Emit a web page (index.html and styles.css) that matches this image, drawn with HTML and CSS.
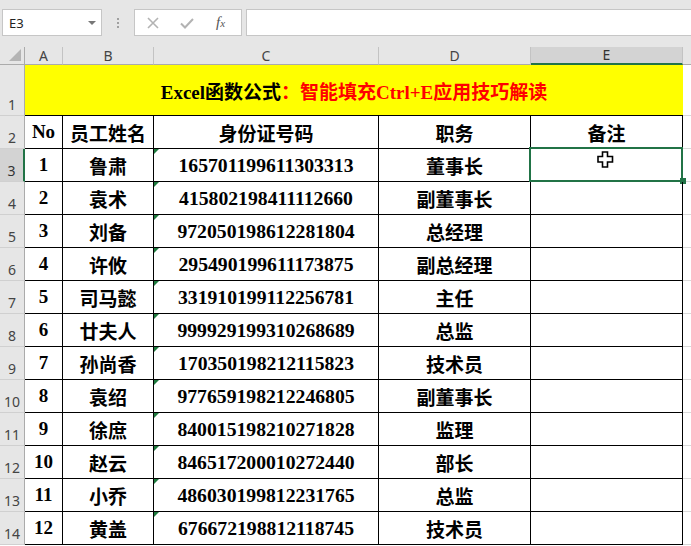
FILE: index.html
```html
<!DOCTYPE html>
<html>
<head>
<meta charset="utf-8">
<link rel="stylesheet" href="styles.css">
</head>
<body>
<div class="toolbar">
  <div class="namebox"><span class="ref">E3</span><span class="caret"></span></div>
  <div class="dots"><i></i><i></i><i></i></div>
  <div class="fxbox">
    <svg class="ico" width="14" height="14" viewBox="0 0 14 14"><path d="M2 2 L12 12 M12 2 L2 12" stroke="#b3b3b3" stroke-width="1.6" fill="none"/></svg>
    <svg class="ico" width="16" height="14" viewBox="0 0 16 14"><path d="M2 7.5 L6 11.5 L14 3" stroke="#b3b3b3" stroke-width="2" fill="none"/></svg>
    <span class="fx">f<small>x</small></span>
  </div>
  <div class="formula"></div>
</div>
<div class="sheet">
  <div class="corner"><span class="tri"></span></div>
  <div class="ch">A</div><div class="ch">B</div><div class="ch">C</div><div class="ch">D</div><div class="ch sel">E</div><div class="ch last"></div>

  <div class="rh">1</div>
  <div class="title">Excel函数公式<span class="red">：智能填充Ctrl+E应用技巧解读</span></div>
  <div class="f"></div>

  <div class="rh">2</div>
  <div class="c">No</div><div class="c">员工姓名</div><div class="c">身份证号码</div><div class="c">职务</div><div class="c">备注</div><div class="f"></div>

  <div class="rh sel">3</div>
  <div class="c">1</div><div class="c">鲁肃</div><div class="c num">165701199611303313</div><div class="c">董事长</div><div class="c active"><span class="selbox"></span><span class="handle"></span><svg class="cursor" width="17" height="18" viewBox="0 0 17 18"><path d="M5.5 1 H10.5 V5.5 H15.5 V11 H10.5 V16 H5.5 V11 H1 V5.5 H5.5 Z" fill="#fff" stroke="#000" stroke-width="1.6"/></svg></div><div class="f"></div>

  <div class="rh">4</div>
  <div class="c">2</div><div class="c">袁术</div><div class="c num">415802198411112660</div><div class="c">副董事长</div><div class="c"></div><div class="f"></div>

  <div class="rh">5</div>
  <div class="c">3</div><div class="c">刘备</div><div class="c num">972050198612281804</div><div class="c">总经理</div><div class="c"></div><div class="f"></div>

  <div class="rh">6</div>
  <div class="c">4</div><div class="c">许攸</div><div class="c num">295490199611173875</div><div class="c">副总经理</div><div class="c"></div><div class="f"></div>

  <div class="rh">7</div>
  <div class="c">5</div><div class="c">司马懿</div><div class="c num">331910199112256781</div><div class="c">主任</div><div class="c"></div><div class="f"></div>

  <div class="rh">8</div>
  <div class="c">6</div><div class="c">廿夫人</div><div class="c num">999929199310268689</div><div class="c">总监</div><div class="c"></div><div class="f"></div>

  <div class="rh">9</div>
  <div class="c">7</div><div class="c">孙尚香</div><div class="c num">170350198212115823</div><div class="c">技术员</div><div class="c"></div><div class="f"></div>

  <div class="rh">10</div>
  <div class="c">8</div><div class="c">袁绍</div><div class="c num">977659198212246805</div><div class="c">副董事长</div><div class="c"></div><div class="f"></div>

  <div class="rh">11</div>
  <div class="c">9</div><div class="c">徐庶</div><div class="c num">840015198210271828</div><div class="c">监理</div><div class="c"></div><div class="f"></div>

  <div class="rh">12</div>
  <div class="c">10</div><div class="c">赵云</div><div class="c num">846517200010272440</div><div class="c">部长</div><div class="c"></div><div class="f"></div>

  <div class="rh">13</div>
  <div class="c">11</div><div class="c">小乔</div><div class="c num">486030199812231765</div><div class="c">总监</div><div class="c"></div><div class="f"></div>

  <div class="rh">14</div>
  <div class="c">12</div><div class="c">黄盖</div><div class="c num">676672198812118745</div><div class="c">技术员</div><div class="c"></div><div class="f"></div>
</div>
</body>
</html>
```
FILE: styles.css
```css
html, body {
  margin: 0;
  padding: 0;
}
body {
  width: 691px;
  height: 546px;
  overflow: hidden;
  background: #fff;
  font-family: "Liberation Serif", "Noto Sans CJK SC", serif;
}

/* formula bar */
.toolbar {
  height: 47px;
  box-sizing: border-box;
  padding-top: 9px;
  background: #e6e6e6;
  display: flex;
  align-items: flex-start;
}
.namebox {
  margin-left: 2px;
  width: 100px;
  height: 27px;
  box-sizing: border-box;
  background: #fff;
  border: 1px solid #c6c6c6;
  display: flex;
  align-items: center;
  justify-content: space-between;
  padding: 0 5px 0 6px;
  font-family: "Noto Sans", sans-serif;
  font-size: 13px;
  color: #222;
}
.caret {
  width: 0;
  height: 0;
  border-left: 4px solid transparent;
  border-right: 4px solid transparent;
  border-top: 4px solid #777;
}
.dots {
  width: 32px;
  height: 27px;
  display: flex;
  flex-direction: column;
  align-items: center;
  justify-content: center;
  gap: 2px;
}
.dots i {
  width: 2px;
  height: 2px;
  background: #a0a0a0;
}
.fxbox {
  width: 108px;
  height: 27px;
  box-sizing: border-box;
  background: #fff;
  border: 1px solid #c6c6c6;
  display: flex;
  align-items: center;
  padding-left: 11px;
  gap: 19px;
}
.fx {
  font-family: "Liberation Serif", serif;
  font-style: italic;
  font-size: 15px;
  color: #555;
  margin-left: 2px;
}
.fx small {
  font-size: 11px;
}
.formula {
  margin-left: 4px;
  flex: 1;
  height: 27px;
  box-sizing: border-box;
  background: #fff;
  border: 1px solid #c6c6c6;
  margin-right: -3px;
}

/* sheet grid */
.sheet {
  display: grid;
  grid-template-columns: 25px 38px 91px 225px 152px 152px 1fr;
  grid-template-rows: 18px 51px repeat(13, 33px);
}
.corner {
  background: #e6e6e6;
  border-right: 1px solid #ababab;
  border-bottom: 1px solid #ababab;
  box-sizing: border-box;
  position: relative;
}
.tri {
  position: absolute;
  right: 3px;
  bottom: 3px;
  width: 0;
  height: 0;
  border-left: 12px solid transparent;
  border-bottom: 12px solid #b4b4b4;
}
.ch {
  background: #e6e6e6;
  box-sizing: border-box;
  border-right: 1px solid #c3c3c3;
  border-bottom: 1px solid #ababab;
  display: flex;
  align-items: center;
  justify-content: center;
  font-family: "Noto Sans", sans-serif;
  font-size: 14px;
  color: #444;
  line-height: 1;
}
.ch.sel {
  background: #d3d3d3;
  border-bottom: 2px solid #217346;
  color: #333;
}
.ch.last {
  border-right: none;
}
.rh {
  background: #e6e6e6;
  box-sizing: border-box;
  border-right: 1px solid #ababab;
  border-bottom: 1px solid #d0d0d0;
  display: flex;
  align-items: flex-end;
  justify-content: center;
  padding-bottom: 1px;
  font-family: "Noto Sans", sans-serif;
  font-size: 14px;
  line-height: 1.2;
  color: #444;
}
.rh.sel {
  background: #d3d3d3;
  border-right: 2px solid #217346;
  color: #333;
}
.title {
  grid-column: span 5;
  background: #ffff00;
  box-sizing: border-box;
  border-bottom: 1px solid #000;
  display: flex;
  align-items: center;
  justify-content: center;
  font-weight: bold;
  font-size: 19px;
  color: #000;
}
.red {
  color: #ff0000;
}
.c {
  box-sizing: border-box;
  border-right: 1px solid #000;
  border-bottom: 1px solid #000;
  display: flex;
  align-items: center;
  justify-content: center;
  font-weight: bold;
  font-size: 19px;
  color: #000;
  position: relative;
}
.c.num {
  font-size: 19.7px;
}
.c.num::before {
  content: "";
  position: absolute;
  left: 0;
  top: 0;
  width: 0;
  height: 0;
  border-top: 5px solid #1e7a3e;
  border-right: 5px solid transparent;
}
.f {
  box-sizing: border-box;
  border-bottom: 1px solid #d9d9d9;
}
.selbox {
  position: absolute;
  left: -2px;
  top: -2px;
  width: 154px;
  height: 35px;
  box-sizing: border-box;
  border: 2px solid #217346;
}
.handle {
  position: absolute;
  left: 149px;
  top: 29px;
  width: 6px;
  height: 6px;
  background: #217346;
}
.cursor {
  position: absolute;
  left: 66px;
  top: 2px;
}
```
